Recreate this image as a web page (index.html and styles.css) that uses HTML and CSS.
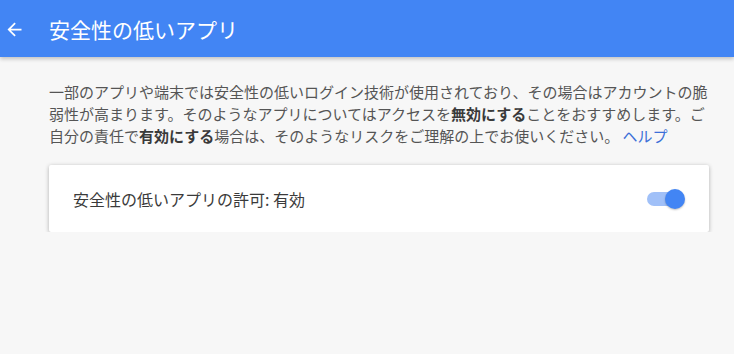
FILE: index.html
```html
<!DOCTYPE html>
<html lang="ja">
<head>
<meta charset="utf-8">
<link rel="stylesheet" href="styles.css">
</head>
<body>
<header class="appbar">
  <svg class="back" viewBox="0 0 24 24" width="21" height="21"><path d="M20 11H7.83l5.59-5.59L12 4l-8 8 8 8 1.41-1.41L7.83 13H20v-2z" fill="#fff"/></svg>
  <h1 class="title">安全性の低いアプリ</h1>
</header>
<main class="content">
  <p class="desc">一部のアプリや端末では安全性の低いログイン技術が使用されており、その場合はアカウントの脆<br>弱性が高まります。そのようなアプリについてはアクセスを<b>無効にする</b>ことをおすすめします。ご<br>自分の責任で<b>有効にする</b>場合は、そのようなリスクをご理解の上でお使いください。 <a class="help" href="#">ヘルプ</a></p>
  <section class="card">
    <span class="card-label">安全性の低いアプリの許可: 有効</span>
    <span class="toggle"><span class="track"></span><span class="knob"></span></span>
  </section>
</main>
</body>
</html>
```
FILE: styles.css
```css
html, body {
  margin: 0;
  padding: 0;
  background: #f7f7f7;
  font-family: "Noto Sans CJK JP", "Noto Sans", sans-serif;
}
.appbar {
  height: 57px;
  background: #4285f4;
  display: flex;
  align-items: center;
  box-shadow: 0 2px 4px rgba(0,0,0,0.22);
  position: relative;
}
.back {
  margin-left: 4px;
  margin-top: 1px;
  flex: none;
}
.title {
  margin: 0 0 0 24px;
  font-size: 21px;
  font-weight: 400;
  color: #fff;
  line-height: 1;
  margin-top: 2px;
}
.content {
  padding: 24px 25px 0 49px;
}
.desc {
  margin: 0;
  font-size: 15px;
  line-height: 22px;
  color: #555;
  white-space: nowrap;
}
.desc b {
  color: #3a3a3a;
  font-weight: 700;
}
.help {
  color: #3c6fd8;
  text-decoration: none;
}
.card {
  margin-top: 18px;
  height: 67px;
  background: #fff;
  box-shadow: 0 1px 4px rgba(0,0,0,0.3);
  border-radius: 2px;
  display: flex;
  align-items: center;
  justify-content: space-between;
  padding: 0 24px;
}
.card-label {
  font-size: 16px;
  color: #3a3a3a;
}
.toggle {
  position: relative;
  width: 38px;
  height: 20px;
  display: flex;
  align-items: center;
}
.track {
  width: 34px;
  height: 14px;
  border-radius: 7px;
  background: #a0c0f8;
}
.knob {
  position: absolute;
  right: 0;
  top: 0;
  width: 20px;
  height: 20px;
  border-radius: 50%;
  background: #4285f4;
  box-shadow: 0 1px 2px rgba(0,0,0,0.25);
}
```
